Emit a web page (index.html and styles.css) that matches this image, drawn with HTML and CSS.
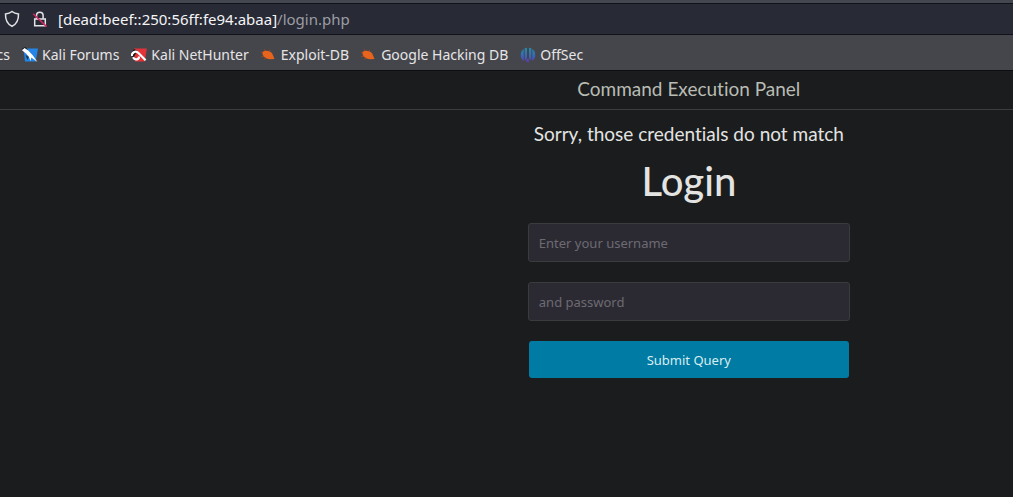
FILE: index.html
```html
<!DOCTYPE html>
<html lang="en">
<head>
<meta charset="utf-8">
<title>Command Execution Panel</title>
<link rel="stylesheet" href="styles.css">
</head>
<body>
<header class="browser">
  <div class="address">
    <svg class="shield" viewBox="0 0 16 18" aria-hidden="true"><path d="M8 1.5 C6.2 3 4 3.7 1.5 3.9 C1.3 9.5 3 14 8 16.3 C13 14 14.7 9.5 14.5 3.9 C12 3.7 9.8 3 8 1.5Z"/></svg>
    <svg class="lock" viewBox="0 0 16 18" aria-hidden="true"><path d="M4.5 9V5.5a3.3 3.3 0 0 1 6.6 0V9M2.7 9h10.6v6.7H2.7z"/><path class="slash" d="M1.2 3.8 14.6 16.6"/></svg>
    <span class="url">[dead:beef::250:56ff:fe94:abaa]<span class="path">/login.php</span></span>
  </div>
  <nav class="bookmarks">
    <a class="clipped" href="#">cs</a>
    <a href="#"><svg viewBox="0 0 16 16" aria-hidden="true"><path fill="#2485e8" d="M1.5 1.5h14.5l-2.3 13H3z"/><path fill="#15191f" d="M0 1.5 3.5 0 6 3 2.5 5z"/><path fill="#fff" d="M0 3.2 2.5 1 6 3.3 10.7 8.2 15.5 15 9.3 10.4 8.6 14 6.7 9.6 4 6.4Z"/><path fill="#17324f" d="m3.5 8 3.2 2-1.2 3z"/></svg>Kali Forums</a>
    <a href="#"><svg viewBox="0 0 16 16" aria-hidden="true"><path fill="#e33238" d="M3 1.5h12.8l-2 13H4z"/><path fill="#17191d" d="M0 6 3.2 2 6.5 4 2 11z"/><path fill="none" stroke="#fff" stroke-width="2.2" d="M.7 9C.8 4.9 5 3.5 7.2 5.8L14.6 13.2M2 10.2C4.2 14 8.2 12.5 8 9.5"/></svg>Kali NetHunter</a>
    <a href="#"><svg viewBox="0 0 16 16" aria-hidden="true"><path fill="none" stroke="#8a4528" stroke-width="1" d="M0 5.4h4M0 9.5h4M3 12.5l3-2M3 2l2 3M9 2.5 8 5"/><path fill="#e8641c" d="M1.5 5.2C4.5 2.6 9 4 11.2 6.5L13.5 12 9 12.3C4.6 11.6 1 9.1 1.5 5.2z"/></svg>Exploit-DB</a>
    <a href="#"><svg viewBox="0 0 16 16" aria-hidden="true"><path fill="none" stroke="#8a4528" stroke-width="1" d="M0 5.4h4M0 9.5h4M3 12.5l3-2M3 2l2 3M9 2.5 8 5"/><path fill="#e8641c" d="M1.5 5.2C4.5 2.6 9 4 11.2 6.5L13.5 12 9 12.3C4.6 11.6 1 9.1 1.5 5.2z"/></svg>Google Hacking DB</a>
    <a href="#"><svg viewBox="0 0 16 16" aria-hidden="true"><defs><linearGradient id="offsec" x2="0" y2="1"><stop stop-color="#248ea9"/><stop offset=".6" stop-color="#3964bb"/><stop offset="1" stop-color="#6632b5"/></linearGradient></defs><path fill="url(#offsec)" d="M3.7 2v12C-.2 11.4-.2 4.6 3.7 2zM4.7 1.3 7 .8v10.7l-2.3 2zM9 .8l2.3.5v12.2L9 11.5zM12.3 2c3.9 2.6 3.9 9.4 0 12zM7.2 12h1.6v3.7L5.7 14z"/></svg>OffSec</a>
  </nav>
</header>
<div class="page">
  <div class="banner">Command Execution Panel</div>
  <main class="login">
    <p class="error">Sorry, those credentials do not match</p>
    <h1>Login</h1>
    <form>
      <input type="text" aria-label="Username" placeholder="Enter your username">
      <input type="password" aria-label="Password" placeholder="and password">
      <button type="submit">Submit Query</button>
    </form>
  </main>
</div>
</body>
</html>
```
FILE: styles.css
```css
* { box-sizing: border-box; }
body {
  margin: 0;
  min-height: 100vh;
  background: #1a1c1d;
  color: #e3e4e2;
  font-family: "Noto Sans", sans-serif;
  overflow-x: hidden;
}
.browser {
  border-top: 3px solid #444650;
  border-bottom: 1px solid #0d0e11;
  background: #45464b;
}
.address {
  display: flex;
  align-items: center;
  gap: 12px;
  height: 32px;
  padding-left: 4px;
  background: #282a35;
  border-top: 1px solid #101119;
  border-bottom: 1px solid #101119;
}
.address svg {
  width: 16px;
  height: 18px;
  fill: none;
  stroke: #e4e4e8;
  stroke-width: 1.5;
}
.address .slash { stroke: #d32862; }
.url {
  margin-left: -2px;
  font-size: 15px;
  color: #f5f5f7;
  white-space: nowrap;
}
.path { color: #9c9da5; }
.bookmarks {
  display: flex;
  align-items: center;
  gap: 12px;
  height: 35px;
  padding-top: 4px;
}
.bookmarks a {
  display: flex;
  align-items: center;
  gap: 4px;
  color: #e5e5e7;
  font-size: 14px;
  line-height: 20px;
  text-decoration: none;
  white-space: nowrap;
}
.bookmarks svg { width: 16px; height: 16px; }
.bookmarks .clipped {
  width: 10px;
  justify-content: flex-end;
  overflow: hidden;
}
.page {
  font-family: Lato, sans-serif;
  font-variant-ligatures: none;
}
.banner {
  padding: 5px 0 8px 36%;
  border-bottom: 1px solid #3b3d3f;
  color: #b9bcb5;
  font-size: 19px;
  line-height: 25px;
  text-align: center;
}
.login {
  padding: 11px 0 32px 36%;
  text-align: center;
}
.error {
  margin: 0;
  font-size: 19px;
  line-height: 25px;
}
h1 {
  margin: 11px 0 18px;
  font-size: 40px;
  line-height: 48px;
  font-weight: 500;
}
form {
  display: flex;
  flex-direction: column;
  align-items: center;
  gap: 20px;
}
input, button {
  font-family: "Noto Sans", sans-serif;
  font-size: 13px;
  border-radius: 3px;
}
input {
  width: 100%;
  max-width: 322px;
  height: 39px;
  padding: 0 10px;
  border: 1px solid #393b3d;
  background: #2b2a33;
  color: #e3e4e2;
}
input::placeholder { color: #6d6b72; opacity: 1; }
button {
  width: 100%;
  max-width: 320px;
  height: 37px;
  border: 0;
  background: #007ba4;
  color: #d9edf2;
}
```
